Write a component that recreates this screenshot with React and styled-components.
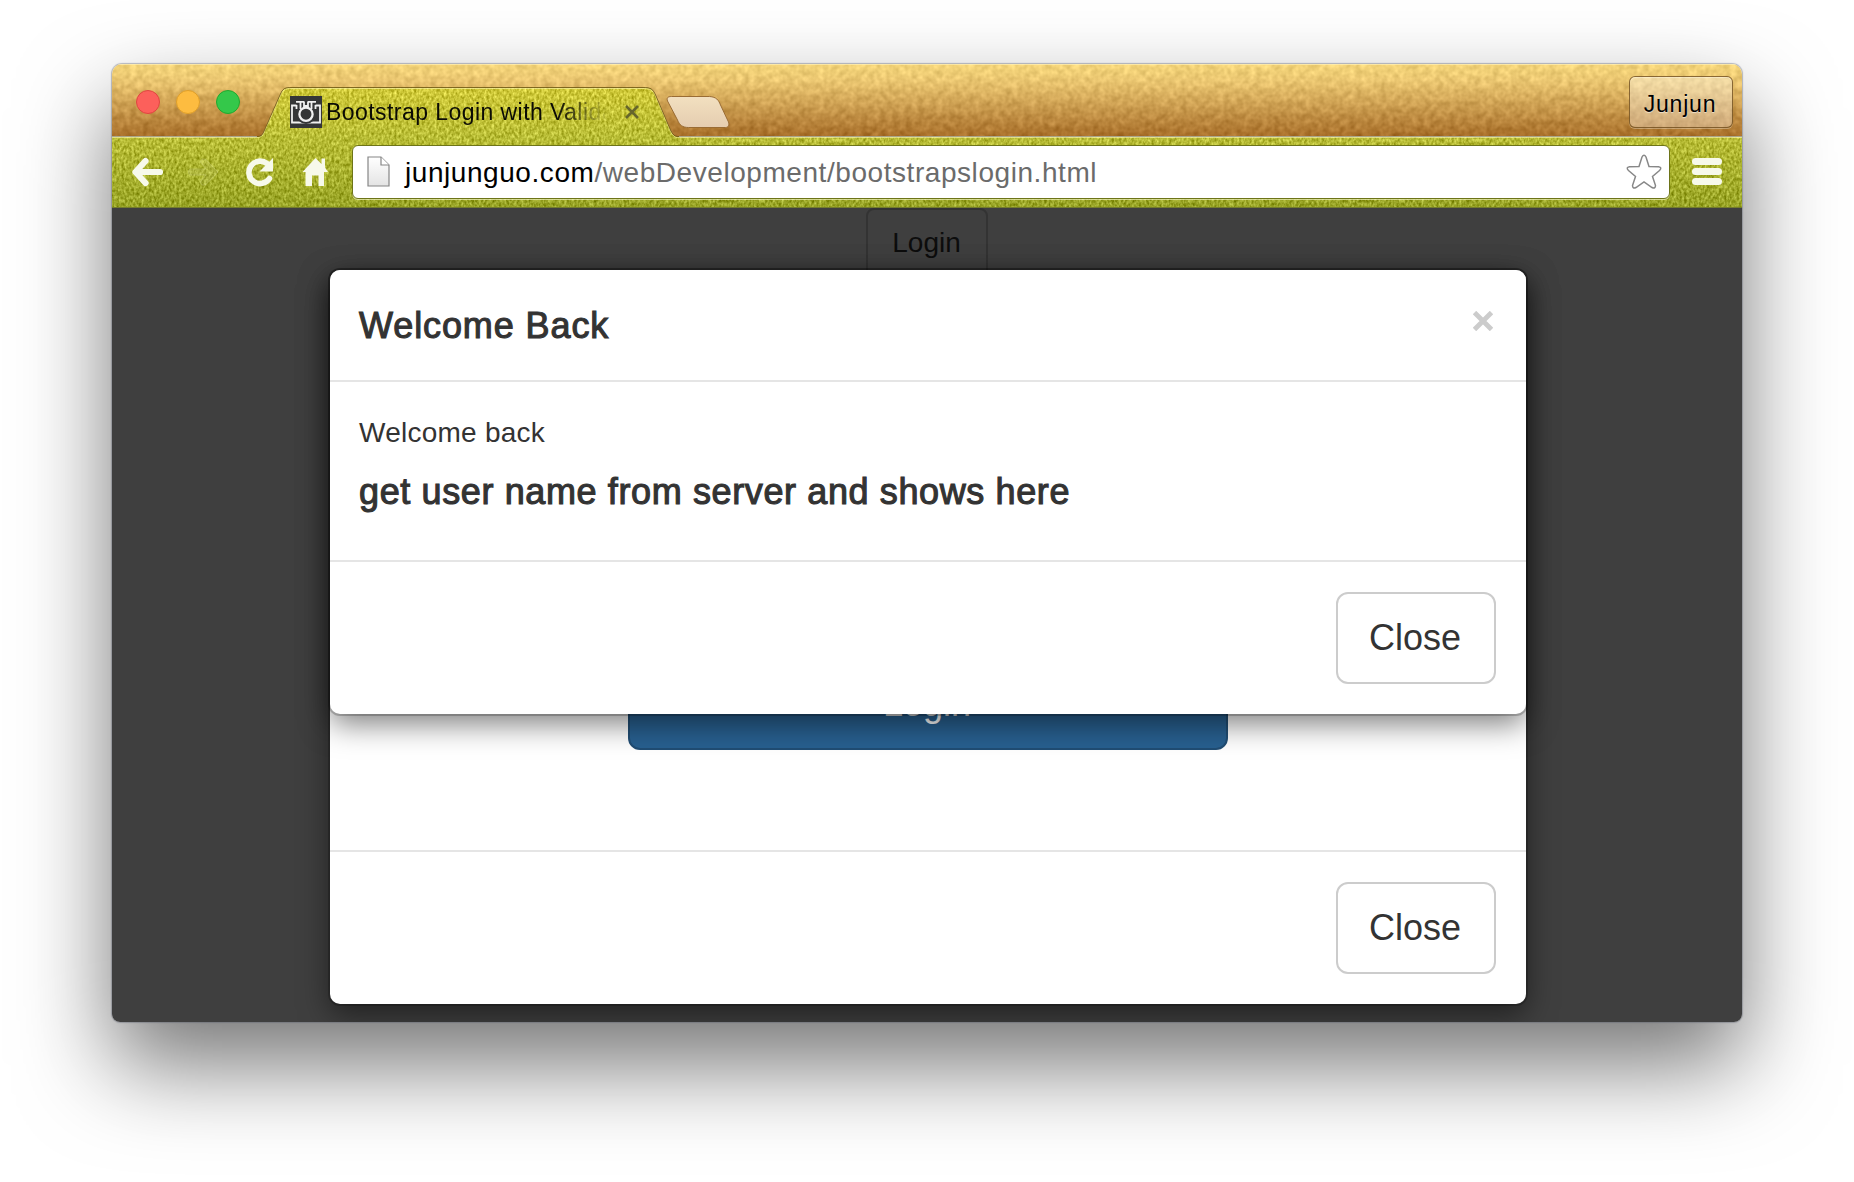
import React from "react";
import styled, { createGlobalStyle } from "styled-components";

const GlobalStyle = createGlobalStyle`
  *, *::before, *::after { box-sizing: border-box; }
  html, body { margin: 0; background: #fff; }
  body { width: 1854px; height: 1182px; overflow: hidden; }
  button { font: inherit; margin: 0; }
`;

const Desktop = styled.main`
  width: 1854px;
  height: 1182px;
  padding: 64px 112px 0;
  font-family: "Liberation Sans", Arial, sans-serif;
  background: #fff;
`;

const BrowserWindow = styled.section`
  width: 1630px;
  height: 958px;
  display: flex;
  flex-direction: column;
  border-radius: 10px 10px 8px 8px;
  box-shadow: 0 0 1px 1px rgba(90, 95, 110, 0.4), 0 43px 92px rgba(0, 0, 0, 0.54);
`;

const Chrome = styled.header`
  position: relative;
  z-index: 0;
  height: 144px;
  flex: none;
  display: flex;
  flex-direction: column;
  border-radius: 10px 10px 0 0;
  overflow: hidden;
`;

const ChromeArt = styled.svg`
  position: absolute;
  inset: 0;
  z-index: -1;
`;

const TitleBar = styled.div`
  height: 73px;
  display: flex;
  align-items: center;
  padding: 0 9px 0 24px;
`;

const TrafficLights = styled.div`
  display: flex;
  gap: 16px;
  margin-top: 2px;
`;

const Light = styled.span`
  width: 24px;
  height: 24px;
  border-radius: 50%;
  background: ${(p) => p.$fill};
  border: 1px solid ${(p) => p.$edge};
`;

const Tab = styled.div`
  display: flex;
  align-items: center;
  margin: 22px 0 0 50px;
  height: 48px;
  width: 356px;
`;

const TabTitle = styled.span`
  width: 284px;
  margin-left: 4px;
  white-space: nowrap;
  font-size: 23px;
  letter-spacing: 0.44px;
  line-height: 32px;
  color: #0b0b05;
  mask-image: linear-gradient(90deg, #000 230px, transparent 282px);
`;

const TabClose = styled.svg`
  margin-left: 15px;
`;

const ProfileButton = styled.button`
  width: 104px;
  height: 52px;
  margin: 3px 0 0 auto;
  padding: 3px 2px 0 0;
  border: 1px solid rgba(110, 75, 25, 0.8);
  border-radius: 6px;
  background: linear-gradient(rgba(255, 255, 255, 0.36), rgba(255, 245, 235, 0.36));
  box-shadow: inset 0 1px 0 rgba(255, 255, 255, 0.3), 0 1px 0 rgba(255, 255, 255, 0.3);
  font-size: 23px;
  letter-spacing: 0.8px;
  line-height: 30px;
  color: #000;
  text-shadow: 0 1px 1px rgba(255, 255, 255, 0.6);
`;

const Toolbar = styled.div`
  height: 71px;
  display: flex;
  align-items: center;
  padding: 0 20px 2px 19px;
`;

const NavIcons = styled.svg`
  flex: none;
`;

const AddressBar = styled.div`
  width: 1318px;
  height: 54px;
  margin-left: 21px;
  display: flex;
  align-items: center;
  padding: 0 7px 0 14px;
  border: 1px solid #6d7418;
  border-radius: 6px;
  background: #fff;
  box-shadow: 0 1px 0 rgba(255, 255, 220, 0.6);
`;

const Url = styled.span`
  flex: 1;
  margin: 2px 0 0 14px;
  font-size: 28px;
  letter-spacing: 0.56px;
  line-height: 36px;
  white-space: nowrap;
  color: #6b6b6b;
`;

const Host = styled.span`
  color: #000;
`;

const MenuBars = styled.span`
  display: flex;
  flex-direction: column;
  gap: 3px;
  margin-left: 22px;
`;

const MenuBar = styled.i`
  width: 30px;
  height: 7px;
  border-radius: 4px;
  background: #f7f9ea;
`;

const Viewport = styled.div`
  position: relative;
  height: 814px;
  overflow: hidden;
  display: flex;
  flex-direction: column;
  align-items: center;
  background: #3f3f3f;
  border-radius: 0 0 8px 8px;
  color: #333;
`;

const PageLogin = styled.button`
  width: 122px;
  height: 70px;
  flex: none;
  padding: 0 1px 0 0;
  border: 2px solid #333;
  border-radius: 8px;
  background: transparent;
  font-size: 28px;
  color: #0d0d0d;
`;

const Dialog = styled.section`
  position: absolute;
  left: 218px;
  top: ${(p) => p.$top}px;
  width: 1196px;
  height: ${(p) => p.$height}px;
  display: flex;
  flex-direction: column;
  border-radius: 10px;
  background: #fff;
  box-shadow: 0 0 0 2px rgba(0, 0, 0, 0.2), 0 10px 30px rgba(0, 0, 0, 0.5);
`;

const DialogHeader = styled.header`
  height: 112px;
  flex: none;
  display: flex;
  justify-content: space-between;
  padding: 34px 33px 0 29px;
  border-bottom: 2px solid #e5e5e5;
`;

const Heading = styled.h4`
  margin: 0;
  font-size: 36px;
  font-weight: 400;
  line-height: 44px;
  letter-spacing: ${(p) => p.$tracking}px;
  -webkit-text-stroke: 1.1px #333;
  white-space: nowrap;
`;

const DialogBody = styled.div`
  flex: 1;
  min-height: 0;
  padding: 32px 29px 0;
`;

const Greeting = styled.p`
  margin: 0 0 18px;
  font-size: 28px;
  line-height: 38px;
  letter-spacing: 0.25px;
`;

const LoginForm = styled.div`
  flex: 1;
  display: flex;
  flex-direction: column;
  align-items: center;
  justify-content: flex-end;
  padding-bottom: 100px;
`;

const SubmitButton = styled.button`
  width: 600px;
  height: 92px;
  padding: 0 2px 0 0;
  border: 2px solid #204d74;
  border-radius: 12px;
  background: #286090;
  color: #fff;
  font-size: 36px;
  line-height: 48px;
`;

const DialogFooter = styled.footer`
  height: 154px;
  flex: none;
  display: flex;
  justify-content: flex-end;
  padding: 30px;
  border-top: 2px solid #e5e5e5;
`;

const CloseButton = styled.button`
  width: 160px;
  height: 92px;
  padding: 0 2px 0 0;
  border: 2px solid #ccc;
  border-radius: 12px;
  background: #fff;
  color: #333;
  font-size: 36px;
  line-height: 48px;
`;

const DismissIcon = styled.svg`
  margin-top: 7px;
`;

const tabOutline =
  "M0 72.5 H145 C150 72.5 151 70 153 65 L168 31 C171 24 173 23.5 180 23.5 H531 C539 23.5 541 25 544 32 L558 65 C561 71 562 72.5 567 72.5 H1630";

function BrowserArt() {
  return (
    <ChromeArt width="1630" height="144" viewBox="0 0 1630 144" aria-hidden="true">
      <defs>
        <linearGradient id="wood" x1="0" y1="0" x2="0" y2="1">
          <stop offset="0" stopColor="#f4d57c" />
          <stop offset="0.22" stopColor="#ebc774" />
          <stop offset="0.6" stopColor="#c99a50" />
          <stop offset="1" stopColor="#a66c2a" />
        </linearGradient>
        <linearGradient id="grass" x1="0" y1="24" x2="0" y2="144" gradientUnits="userSpaceOnUse">
          <stop offset="0" stopColor="#cfc838" />
          <stop offset="0.4" stopColor="#b9bd36" />
          <stop offset="1" stopColor="#97a325" />
        </linearGradient>
        <linearGradient id="pillFill" x1="0" y1="0" x2="0" y2="1">
          <stop offset="0" stopColor="#f2e0c0" />
          <stop offset="1" stopColor="#e5cdb0" />
        </linearGradient>
        <filter id="woodGrain" x="0" y="0" width="100%" height="100%" colorInterpolationFilters="sRGB">
          <feTurbulence type="fractalNoise" baseFrequency="0.16" numOctaves="2" seed="4" />
          <feColorMatrix values="0.22 0 0 0 0  0.22 0 0 0 0  0.2 0 0 0 0  0 0 0 0 1" result="n" />
          <feComposite in="SourceGraphic" in2="n" operator="arithmetic" k2="1" k3="1" k4="-0.11" result="sum" />
          <feComponentTransfer><feFuncA type="linear" slope="0" intercept="1" /></feComponentTransfer>
          <feComposite in2="SourceGraphic" operator="in" />
        </filter>
        <filter id="grassGrain" x="0" y="0" width="100%" height="100%" colorInterpolationFilters="sRGB">
          <feTurbulence type="fractalNoise" baseFrequency="0.4 0.28" numOctaves="2" seed="9" />
          <feColorMatrix values="0.5 0 0 0 0  0.5 0 0 0 0  0.5 0 0 0 0  0 0 0 0 1" result="n" />
          <feComposite in="SourceGraphic" in2="n" operator="arithmetic" k2="1" k3="1" k4="-0.25" result="sum" />
          <feComponentTransfer><feFuncA type="linear" slope="0" intercept="1" /></feComponentTransfer>
          <feComposite in2="SourceGraphic" operator="in" />
        </filter>
      </defs>
      <rect width="1630" height="74" fill="url(#wood)" filter="url(#woodGrain)" />
      <path d={`${tabOutline} V144 H0 Z`} fill="url(#grass)" filter="url(#grassGrain)" />
      <path d={tabOutline} fill="none" stroke="#fff6b0" strokeOpacity="0.6" transform="translate(0 1)" />
      <path d={tabOutline} fill="none" stroke="#796019" strokeOpacity="0.85" />
      <path d="M0 72.5 H145 M567 72.5 H1630" stroke="#aaa58a" />
      <path
        d="M560 32.5 H598 C605 33 607 36 609 41 L617 58 C618 61 617 63.5 614 63.5 H577 C571 63.5 568 61 566 56 L556 37 C555 34 556 32.5 560 32.5 Z"
        transform="translate(-0.5 0)"
        fill="url(#pillFill)"
        stroke="#9a6c34"
      />
      <path d="M0 0.5 H1630" stroke="#fff0b8" strokeOpacity="0.7" />
      <path d="M0 143.5 H1630" stroke="#737c2c" />
    </ChromeArt>
  );
}

function Favicon() {
  return (
    <svg width="32" height="32" viewBox="0 0 32 32" aria-hidden="true">
      <rect width="32" height="32" fill="#353637" />
      <g fill="none" stroke="#f0f0f0" strokeWidth="1.8">
        <path d="M6.5 9.5 H2 V26.5 H30 V9.500 H25.5" />
        <circle cx="16" cy="18" r="8.200" stroke="#353637" strokeWidth="3.500" fill="#353637" />
        <circle cx="16" cy="18.200" r="6.600" strokeWidth="2.300" />
        <path d="M6 5.900 H14.500 M17.500 5.900 H26 M10.500 6 V13 M21.500 6 V13 M14 6 V10 H18 V6 M6.500 9 V13 M25.500 9 V13" />
      </g>
    </svg>
  );
}

function Navigation() {
  return (
    <NavIcons width="200" height="32" viewBox="0 0 200 32" aria-hidden="true">
      <path
        d="M14.500 5 L4.500 16 L14.500 27 M5 16 H29"
        fill="none"
        stroke="#f7f9ea"
        strokeWidth="6.200"
        strokeLinecap="round"
        strokeLinejoin="round"
      />
      <path
        d="M59 13 H75 L69.500 6.500 Q70 1 75 3.500 L87 16 L75 28.500 Q70 31 69.500 25.500 L75 19 H59 Q55.500 16 59 13 Z"
        fill="#fff"
        fillOpacity="0.07"
        stroke="#e9edb0"
        strokeOpacity="0.25"
      />
      <path d="M138.500 22.500 A11.200 11.200 0 1 1 136 7.500" fill="none" stroke="#f7f9ea" strokeWidth="5.600" strokeLinecap="round" />
      <path d="M142 2 V15.500 H128.500 Z" fill="#f7f9ea" />
      <path d="M184.500 2 L190.500 8 V2.500 H194 V11.500 L197 16 H193 V30 H187.500 V19.500 H181 V30 H174.500 V16 H171.500 Z" fill="#f7f9ea" />
    </NavIcons>
  );
}

function PageIcon() {
  return (
    <svg width="24" height="32" viewBox="0 0 24 32" aria-hidden="true">
      <defs>
        <linearGradient id="paper" x1="0" y1="0" x2="0" y2="1">
          <stop offset="0" stopColor="#fff" />
          <stop offset="1" stopColor="#e4e4e4" />
        </linearGradient>
      </defs>
      <path d="M1 1 H14 L22 9 V30 H1 Z" fill="url(#paper)" stroke="#858585" strokeWidth="1.2" />
      <path d="M14 1 V9 H22" fill="#fff" stroke="#858585" strokeWidth="1.2" />
    </svg>
  );
}

function StarIcon() {
  return (
    <svg width="36" height="36" viewBox="0 0 36 36" aria-hidden="true">
      <path
        d="M16 3 Q18 -0.5 20 3 L23 12.5 L32.5 12.7 Q36.5 13.5 33.5 16.5 L26.5 22.5 L29.5 31.5 Q29.5 35 26 33.5 L18 28 L10 33.5 Q6.5 35 6.5 31.5 L9.5 22.5 L2.5 16.5 Q-0.5 13.5 3.5 12.7 L13 12.5 Z"
        fill="#fff"
        stroke="#888"
        strokeWidth="1.5"
      />
    </svg>
  );
}

export default function App() {
  return (
    <>
      <GlobalStyle />
      <Desktop>
        <BrowserWindow>
          <Chrome>
            <BrowserArt />
            <TitleBar>
              <TrafficLights>
                <Light $fill="#fc605b" $edge="#e0453f" />
                <Light $fill="#fdbc40" $edge="#e09f29" />
                <Light $fill="#34c84a" $edge="#20a92e" />
              </TrafficLights>
              <Tab>
                <Favicon />
                <TabTitle>Bootstrap Login with Valida</TabTitle>
                <TabClose width="14" height="14" viewBox="0 0 14 14" aria-label="Close tab">
                  <path d="M1 1 L13 13 M13 1 L1 13" stroke="#66662c" strokeWidth="2.6" />
                </TabClose>
              </Tab>
              <ProfileButton>Junjun</ProfileButton>
            </TitleBar>
            <Toolbar>
              <Navigation />
              <AddressBar>
                <PageIcon />
                <Url>
                  <Host>junjunguo.com</Host>/webDevelopment/bootstrapslogin.html
                </Url>
                <StarIcon />
              </AddressBar>
              <MenuBars>
                <MenuBar />
                <MenuBar />
                <MenuBar />
              </MenuBars>
            </Toolbar>
          </Chrome>
          <Viewport>
            <PageLogin>Login</PageLogin>
            <Dialog $top={62} $height={734}>
              <LoginForm>
                <SubmitButton>Login</SubmitButton>
              </LoginForm>
              <DialogFooter>
                <CloseButton>Close</CloseButton>
              </DialogFooter>
            </Dialog>
            <Dialog $top={62} $height={444}>
              <DialogHeader>
                <Heading $tracking={0.9}>Welcome Back</Heading>
                <DismissIcon width="20" height="20" viewBox="0 0 20 20" aria-label="Dismiss">
                  <path d="M1.5 1.5 L18.5 18.5 M18.5 1.5 L1.5 18.5" stroke="#ccc" strokeWidth="4.8" />
                </DismissIcon>
              </DialogHeader>
              <DialogBody>
                <Greeting>Welcome back</Greeting>
                <Heading as="h3" $tracking={0.62}>get user name from server and shows here</Heading>
              </DialogBody>
              <DialogFooter>
                <CloseButton>Close</CloseButton>
              </DialogFooter>
            </Dialog>
          </Viewport>
        </BrowserWindow>
      </Desktop>
    </>
  );
}
